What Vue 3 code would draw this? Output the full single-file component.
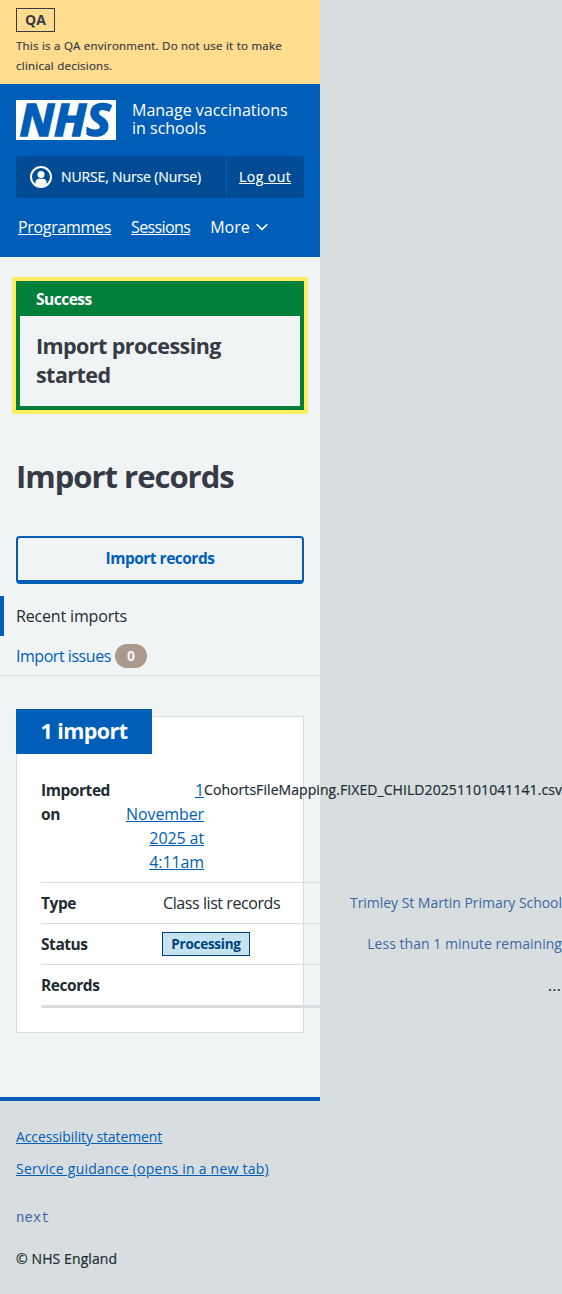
<script setup>
const details = [
  { key: 'Type', value: 'Class list records', note: 'Trimley St Martin Primary School', noteClass: 'note-school' },
  { key: 'Status', tag: 'Processing', note: 'Less than 1 minute remaining', noteClass: 'note-time' },
]
</script>

<template>
  <div class="page">
    <div class="environment">
      <strong class="environment-tag">QA</strong>
      <p>This is a QA environment. Do not use it to make<br>clinical decisions.</p>
    </div>

    <header class="header">
      <div class="service">
        <svg class="logo" viewBox="0 0 100 40" role="img" aria-label="NHS">
          <rect width="100" height="40" fill="#fff" />
          <text x="3.5" y="36" textLength="91" lengthAdjust="spacingAndGlyphs">NHS</text>
        </svg>
        <span class="service-name">Manage vaccinations<br>in schools</span>
      </div>
      <div class="account">
        <div class="user">
          <svg width="22" height="22" viewBox="0 0 22 22">
            <circle cx="11" cy="11" r="10" fill="none" stroke="#fff" stroke-width="2" />
            <circle cx="11" cy="8.4" r="3.5" fill="#fff" />
            <path d="M5.4 18.6v-2.1c0-2.2 1.6-3.8 3.8-3.8h3.6c2.2 0 3.8 1.6 3.8 3.8v2.1c-1.6 1.3-3.5 2-5.6 2s-4-.7-5.6-2z" fill="#fff" />
          </svg>
          <span>NURSE, Nurse (Nurse)</span>
        </div>
        <div class="logout"><a>Log out</a></div>
      </div>
      <nav class="nav">
        <a class="programmes">Programmes</a>
        <a class="sessions">Sessions</a>
        <span class="more">More
          <svg width="12" height="8" viewBox="0 0 12 8"><path d="M.7 1.2 6 6.4l5.3-5.2" fill="none" stroke="#fff" stroke-width="1.6" /></svg>
        </span>
      </nav>
    </header>

    <main class="main">
      <section class="banner">
        <h2>Success</h2>
        <p>Import processing started</p>
      </section>
      <h1>Import records</h1>
      <button class="button">Import records</button>
      <div class="tabs">
        <a class="tab current">Recent imports</a>
        <a class="tab issues">Import issues <span class="count">0</span></a>
      </div>

      <section class="card">
        <h2>1 import</h2>
        <dl>
          <div class="row imported">
            <dt>Imported on</dt>
            <dd>
              <a>1 November 2025 at 4:11am</a>
              <span class="file">CohortsFileMapping.FIXED_CHILD20251101041141.csv</span>
            </dd>
          </div>
          <div v-for="item in details" :key="item.key" class="row">
            <dt>{{ item.key }}</dt>
            <dd>
              <strong v-if="item.tag" class="tag">{{ item.tag }}</strong>
              <span v-else class="value">{{ item.value }}</span>
              <span class="note" :class="item.noteClass">{{ item.note }}</span>
            </dd>
          </div>
          <div class="row last">
            <dt>Records</dt>
            <dd><span class="pending">…</span></dd>
          </div>
        </dl>
      </section>
    </main>

    <footer class="footer">
      <a class="statement">Accessibility statement</a>
      <a class="guidance">Service guidance (opens in a new tab)</a>
      <code>next</code>
      <p>© NHS England</p>
    </footer>
  </div>
</template>

<style>
body {
  background: #d8dde0;
}
</style>

<style scoped>
.page {
  box-sizing: border-box;
  width: 320px;
  height: 1294px;
  display: flex;
  flex-direction: column;
  color: #212b32;
  font: 400 16px/24px "Open Sans", "Noto Sans", sans-serif;
}
.page * {
  box-sizing: border-box;
}
h1, h2, p, dl, dd {
  margin: 0;
}
.environment {
  height: 84px;
  padding: 8px 16px 0;
  background: #ffdc8e;
  color: #353a45;
}
.environment-tag {
  display: block;
  width: 39px;
  height: 24px;
  border: 1px solid #353a45;
  font-size: 14px;
  font-weight: 700;
  line-height: 22px;
  text-align: center;
}
.environment p {
  margin-top: 4px;
  font-size: 11.5px;
  line-height: 20px;
  letter-spacing: .24px;
  white-space: nowrap;
  -webkit-text-stroke: .2px;
}
.header {
  height: 173px;
  padding: 16px 16px 0;
  background: #005eb8;
  color: #fff;
}
.service {
  display: flex;
  gap: 16px;
  height: 40px;
}
.logo {
  width: 100px;
  height: 40px;
}
.logo text {
  fill: #005eb8;
  stroke: #005eb8;
  stroke-width: 1.7px;
  font: italic 700 45px/1 "Open Sans", sans-serif;
}
.service-name {
  padding-top: 1px;
  line-height: 18px;
  white-space: nowrap;
}
.account {
  display: flex;
  height: 42px;
  margin-top: 16px;
  background: #004b93;
  border-radius: 4px;
  font-size: 14px;
}
.user {
  display: flex;
  align-items: center;
  gap: 9px;
  width: 210px;
  padding-left: 14px;
  letter-spacing: -.14px;
  -webkit-text-stroke: .15px;
}
.logout {
  flex: 1;
  margin: 1px 0;
  padding: 8px 0 0 12px;
  border-left: 1px solid #005eb8;
  letter-spacing: .45px;
  -webkit-text-stroke: .15px;
}
a {
  text-decoration: underline;
  text-underline-offset: 1px;
  text-decoration-thickness: 1px;
}
.nav {
  display: flex;
  gap: 20px;
  padding: 17px 2px 0;
}
.programmes {
  letter-spacing: -.31px;
}
.sessions {
  letter-spacing: -.62px;
}
.more {
  display: flex;
  align-items: center;
  gap: 6px;
}
.main {
  height: 840px;
  background: #f0f4f5;
  padding: 24px 16px 0;
}
.banner {
  height: 129px;
  border: 4px solid #007f3b;
  outline: 4px solid #ffeb60;
}
.banner h2 {
  height: 31px;
  padding-left: 16px;
  background: #007f3b;
  color: #fff;
  font-size: 15.5px;
  font-weight: 700;
  line-height: 28px;
  letter-spacing: -.5px;
}
.banner p {
  width: 220px;
  padding: 15px 0 0 16px;
  font-size: 21.5px;
  font-weight: 700;
  line-height: 29px;
  letter-spacing: -.57px;
  color: #353a45;
}
h1 {
  margin-top: 47px;
  font-size: 31px;
  font-weight: 700;
  line-height: 38px;
  letter-spacing: -1px;
  color: #353a45;
}
.button {
  display: block;
  width: 288px;
  height: 48px;
  margin-top: 41px;
  padding: 0 0 2px;
  border: 2px solid #005eb8;
  border-bottom-width: 4px;
  border-radius: 4px;
  background: transparent;
  color: #005eb8;
  font: 700 15.5px/24px "Open Sans", sans-serif;
  letter-spacing: -.5px;
}
.tabs {
  height: 80px;
  margin: 12px -16px 0;
  border-bottom: 1px solid #d8dde0;
}
.tab {
  display: flex;
  align-items: center;
  height: 40px;
  padding-left: 16px;
  text-decoration: none;
}
.current {
  padding-left: 12px;
  border-left: 4px solid #005eb8;
  letter-spacing: -.16px;
}
.issues {
  gap: 4px;
  color: #005eb8;
  letter-spacing: -.46px;
}
.count {
  width: 32px;
  height: 24px;
  border-radius: 12px;
  background: #ab998d;
  color: #f0f4f5;
  font-size: 14px;
  font-weight: 700;
  text-align: center;
}
.card {
  height: 317px;
  margin-top: 40px;
  padding: 0 24px;
  border: 1px solid #d8dde0;
  background: #fff;
}
.card h2 {
  width: 136px;
  height: 45px;
  margin: -8px 0 0 -25px;
  background: #005eb8;
  color: #fff;
  font-size: 21.5px;
  font-weight: 700;
  line-height: 44px;
  text-align: center;
  letter-spacing: -.55px;
}
.card dl {
  width: 521px;
  margin-top: 16px;
}
.row {
  display: grid;
  grid-template-columns: 122px 1fr;
  padding: 8px 0;
  border-bottom: 1px solid #d8dde0;
}
.row dt {
  font-size: 15.5px;
  font-weight: 700;
  letter-spacing: -.44px;
}
.row dd {
  display: flex;
  justify-content: space-between;
  white-space: nowrap;
}
.imported {
  grid-template-columns: 85px 1fr;
}
.imported dd {
  justify-content: flex-start;
}
.imported a {
  width: 78px;
  color: #005eb8;
  text-align: right;
  white-space: normal;
  letter-spacing: -.1px;
}
.file {
  font-size: 14px;
  letter-spacing: .07px;
  -webkit-text-stroke: .2px;
}
.value {
  letter-spacing: -.42px;
}
.note {
  color: #3a69a1;
  font-size: 14px;
}
.note-school {
  letter-spacing: -.04px;
}
.note-time {
  letter-spacing: .04px;
}
.tag {
  width: 88px;
  height: 24px;
  margin-left: -1px;
  border: 1px solid #00437b;
  background: #c5e3f0;
  color: #00437b;
  font-size: 13.5px;
  font-weight: 700;
  line-height: 22px;
  text-align: center;
  letter-spacing: -.25px;
}
.last {
  border-bottom-width: 3px;
}
.pending {
  margin-left: auto;
  font-size: 17px;
  letter-spacing: 1px;
}
.footer {
  display: flex;
  flex-direction: column;
  align-items: flex-start;
  height: 197px;
  padding: 24px 16px 0;
  border-top: 4px solid #005eb8;
  font-size: 14px;
  white-space: nowrap;
}
.footer a {
  margin-bottom: 8px;
  color: #005eb8;
}
.statement {
  letter-spacing: -.1px;
}
.guidance {
  letter-spacing: .23px;
}
.footer code {
  margin-top: 17px;
  color: #3a69a1;
  font: 14px/24px "Liberation Mono", monospace;
}
.footer p {
  margin-top: 17px;
  letter-spacing: .1px;
  -webkit-text-stroke: .2px;
}
</style>
